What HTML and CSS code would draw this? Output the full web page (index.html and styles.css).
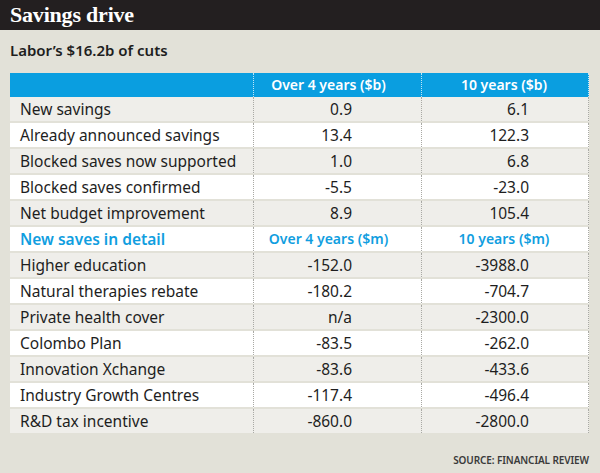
FILE: index.html
```html
<!DOCTYPE html>
<html lang="en">
<head>
<meta charset="utf-8">
<title>Savings drive</title>
<link rel="stylesheet" href="styles.css">
</head>
<body>
<div class="graphic">
  <header class="title-bar"><h1 class="title">Savings drive</h1></header>
  <h2 class="subtitle">Labor’s $16.2b of cuts</h2>
  <table class="data">
    <thead>
      <tr class="head">
        <th class="label"></th>
        <th class="c2">Over 4 years ($b)</th>
        <th class="c3">10 years ($b)</th>
      </tr>
    </thead>
    <tbody>
      <tr class="alt"><td class="label">New savings</td><td class="c2">0.9</td><td class="c3">6.1</td></tr>
      <tr><td class="label">Already announced savings</td><td class="c2">13.4</td><td class="c3">122.3</td></tr>
      <tr class="alt"><td class="label">Blocked saves now supported</td><td class="c2">1.0</td><td class="c3">6.8</td></tr>
      <tr><td class="label">Blocked saves confirmed</td><td class="c2">-5.5</td><td class="c3">-23.0</td></tr>
      <tr class="alt"><td class="label">Net budget improvement</td><td class="c2">8.9</td><td class="c3">105.4</td></tr>
      <tr class="sub"><th class="label">New saves in detail</th><th class="c2">Over 4 years ($m)</th><th class="c3">10 years ($m)</th></tr>
      <tr class="alt"><td class="label">Higher education</td><td class="c2">-152.0</td><td class="c3">-3988.0</td></tr>
      <tr><td class="label">Natural therapies rebate</td><td class="c2">-180.2</td><td class="c3">-704.7</td></tr>
      <tr class="alt"><td class="label">Private health cover</td><td class="c2">n/a</td><td class="c3">-2300.0</td></tr>
      <tr><td class="label">Colombo Plan</td><td class="c2">-83.5</td><td class="c3">-262.0</td></tr>
      <tr class="alt"><td class="label">Innovation Xchange</td><td class="c2">-83.6</td><td class="c3">-433.6</td></tr>
      <tr><td class="label">Industry Growth Centres</td><td class="c2">-117.4</td><td class="c3">-496.4</td></tr>
      <tr class="alt"><td class="label">R&amp;D tax incentive</td><td class="c2">-860.0</td><td class="c3">-2800.0</td></tr>
    </tbody>
  </table>
  <p class="source">SOURCE: FINANCIAL REVIEW</p>
</div>
</body>
</html>
```

FILE: styles.css
```css
* { box-sizing: border-box; }
html, body { margin: 0; padding: 0; }
body {
  width: 600px;
  height: 473px;
  background: #e2e1d8;
  font-family: "Noto Sans", "Open Sans", sans-serif;
  color: #1e1e1e;
  overflow: hidden;
}
.graphic { display: flex; flex-direction: column; }
.title-bar {
  background: #231f20;
  height: 30px;
  padding: 0 10px;
  display: flex;
  align-items: center;
}
.title {
  margin: 0;
  font-family: "Liberation Serif", serif;
  font-weight: bold;
  font-size: 22px;
  color: #ffffff;
  letter-spacing: -0.2px;
  line-height: 30px;
}
.subtitle {
  margin: 0;
  padding: 6px 10px 0;
  height: 43px;
  font-size: 15px;
  font-weight: 600;
  line-height: 28px;
  color: #1e1e1e;
}
.data {
  margin: 0 11px 0 10px;
  width: 579px;
  border-collapse: separate;
  border-spacing: 0;
  table-layout: fixed;
  font-size: 15.5px;
}
.data td, .data th {
  height: 26px;
  padding: 0;
  border-bottom: 2px solid #e2e1d8;
  line-height: 24px;
  white-space: nowrap;
}
.data .label { width: 243px; text-align: left; padding-left: 10px; font-weight: 400; }
.data .c2 { width: 168px; border-left: 1px dotted #a9a9a4; text-align: right; padding-right: 69px; }
.data .c3 { width: 168px; border-left: 1px dotted #a9a9a4; border-right: 1px dotted #a9a9a4; text-align: right; padding-right: 59px; }
.data tr { background: #ffffff; }
.data tr.alt { background: #efeeea; }
.data tr.head { background: #0a9ee0; }
.data tr.head th {
  color: #ffffff;
  font-weight: 600;
  font-size: 14px;
  height: 24px;
  border-bottom: 0;
  text-align: center;
  padding: 0;
  border-color: #bfe6f8;
}
.data tr.head th.c2, .data tr.sub th.c2 { padding-right: 18px; }
.data tr.head th.c3, .data tr.sub th.c3 { padding-right: 2px; }
.data tr.sub th {
  color: #109ee0;
  font-weight: 600;
  font-size: 14px;
  text-align: center;
}
.data tr.sub th.label { font-size: 15.5px; text-align: left; padding-left: 10px; }
.data tr:last-child td { border-bottom: 0; height: 24px; }
.source {
  margin: 20px 11px 0 0;
  text-align: right;
  font-size: 10px;
  font-weight: 600;
  color: #3a3a3a;
  line-height: 14px;
  letter-spacing: -0.1px;
}
```
